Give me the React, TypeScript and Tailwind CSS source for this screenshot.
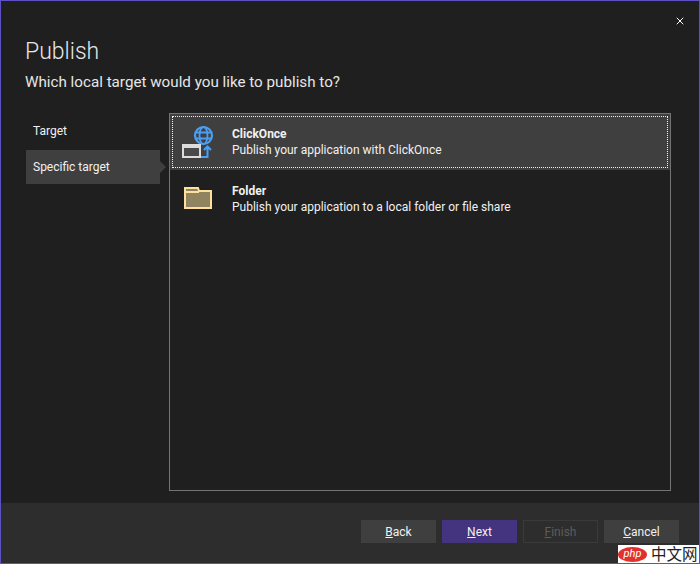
import { X } from 'lucide-react'

const font = { fontFamily: 'Roboto, sans-serif' }

function ClickOnceIcon() {
  return (
    <svg width="32" height="36" viewBox="0 0 32 36" fill="none" className="shrink-0">
      <circle cx="21.5" cy="11.5" r="8.5" stroke="#4a9ff5" strokeWidth="2.2" />
      <ellipse cx="21.5" cy="11.5" rx="4" ry="8.5" stroke="#4a9ff5" strokeWidth="1.8" />
      <path d="M13.5 8.5h16M13.5 14.5h16" stroke="#4a9ff5" strokeWidth="1.8" />
      <rect x="1" y="21" width="17" height="12" fill="#4a4a4a" stroke="#dcdcdc" strokeWidth="2" />
      <path d="M1 23h17" stroke="#dcdcdc" strokeWidth="2" />
      <path d="M19 33h6.5V23M22 26l3.5-3.5L29 26" stroke="#4a9ff5" strokeWidth="2" />
    </svg>
  )
}

function FolderIcon() {
  return (
    <svg width="28" height="22" viewBox="0 0 28 22" fill="none" className="shrink-0">
      <path d="M1 1h13l1 3h12v17H1z" fill="#8f845f" stroke="#ffdf9e" strokeWidth="2" />
      <path d="M1 5h14" stroke="#ffdf9e" strokeWidth="2" />
    </svg>
  )
}

function Button({ label, rest, variant }: { label: string; rest: string; variant: string }) {
  return (
    <button className={`w-[75px] h-[23px] text-[12px] leading-none ${variant}`}>
      <u>{label}</u>{rest}
    </button>
  )
}

export default function App() {
  return (
    <div
      style={font}
      className="relative flex flex-col w-[700px] h-[564px] bg-[#1f1f1f] border border-[#5d50c6] text-[#f1f1f1] overflow-hidden"
    >
      <X size={12} strokeWidth={2} className="absolute top-[14px] right-[13px] text-white" />

      <div className="pl-[24px] pt-[37px] h-[112px] shrink-0">
        <h1 className="text-[23px] leading-[28px] font-light text-[#e6e6e6]">Publish</h1>
        <p className="mt-[6px] text-[15.2px] leading-[20px] text-[#e6e6e6]">Which local target would you like to publish to?</p>
      </div>

      <div className="flex flex-1 min-h-0 pl-[25px] pr-[28px]">
        <div className="w-[143px] shrink-0 text-[12px]">
          <div className="h-[36px] pl-[7px] flex items-center">Target</div>
          <div className="relative h-[34px] w-[134px] mt-[1px] pl-[7px] flex items-center bg-[#3f3f3f]">
            Specific target
            <span className="absolute left-full top-[11px] border-y-[6px] border-l-[6px] border-y-transparent border-l-[#3f3f3f]" />
          </div>
        </div>

        <div className="flex-1 h-[378px] border border-[#737373]">
          <div className="h-[56px] p-[2px] bg-[#3f3f3f]">
            <div className="flex items-center h-full pl-[9px] border border-dotted border-[#f1f1f1]">
              <div className="w-[50px] shrink-0">
                <ClickOnceIcon />
              </div>
              <div className="text-[12px] leading-[16px]">
                <div className="font-bold">ClickOnce</div>
                <div>Publish your application with ClickOnce</div>
              </div>
            </div>
          </div>
          <div className="flex items-center h-[55px] pl-[14px]">
            <div className="w-[48px] shrink-0">
              <FolderIcon />
            </div>
            <div className="text-[12px] leading-[16px] pt-[2px]">
              <div className="font-bold">Folder</div>
              <div>Publish your application to a local folder or file share</div>
            </div>
          </div>
        </div>
      </div>

      <div className="h-[60px] shrink-0 bg-[#2d2d2d] flex justify-end items-start gap-[6px] pt-[17px] pr-[20px]">
        <Button label="B" rest="ack" variant="bg-[#3f3f3f]" />
        <Button label="N" rest="ext" variant="bg-[#44337f]" />
        <Button label="F" rest="inish" variant="border border-[#3a3a3a] text-[#5c5c5c]" />
        <Button label="C" rest="ancel" variant="bg-[#3f3f3f]" />
      </div>

      <div className="absolute right-0 bottom-0 w-[81px] h-[18px] bg-white flex items-center gap-[4px]">
        <span className="w-[29px] h-[15px] rounded-[50%] bg-[#e0312f] text-white text-[11px] italic leading-[14px] text-center">php</span>
        <span className="text-[15.5px] text-[#222] leading-none" style={{ fontFamily: '"Noto Sans CJK SC", sans-serif' }}>中文网</span>
      </div>
    </div>
  )
}
